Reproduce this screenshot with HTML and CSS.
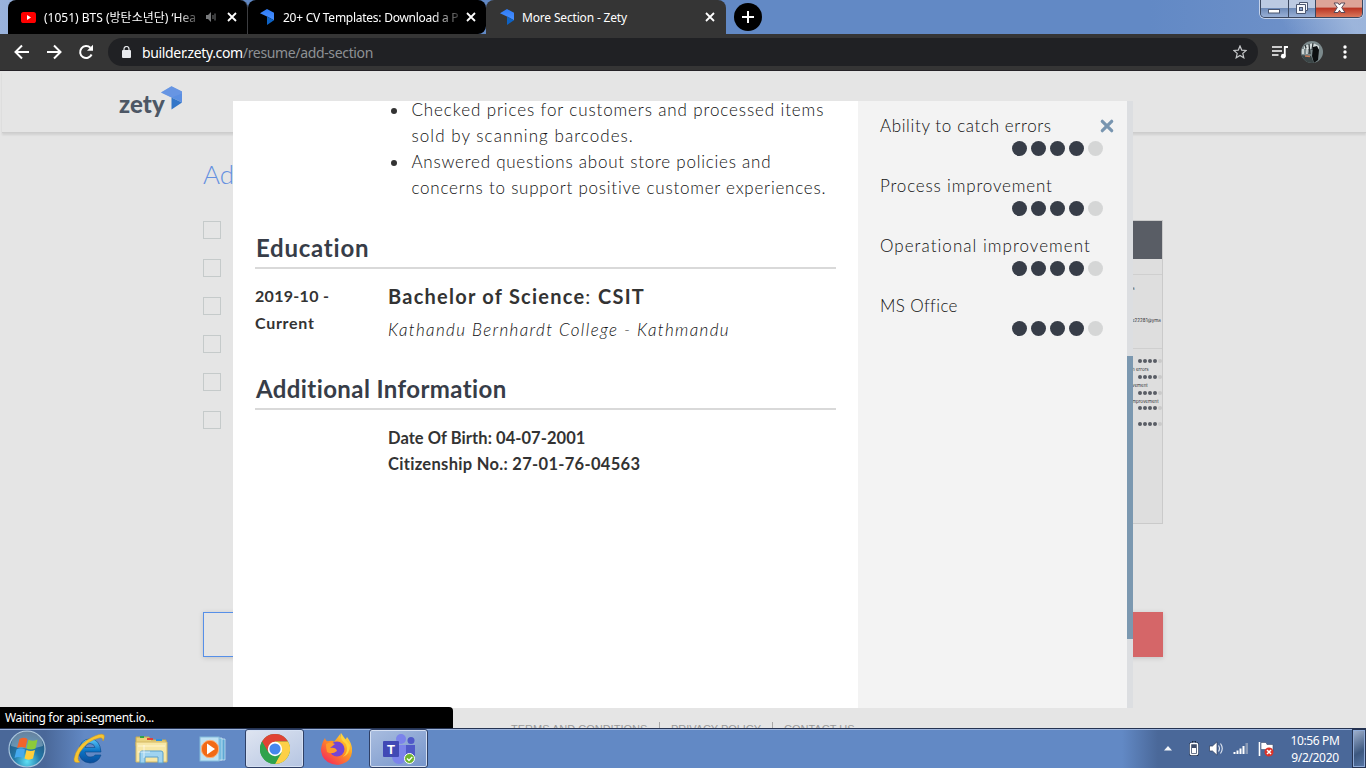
FILE: index.html
```
<!DOCTYPE html>
<html lang="en">
<head>
<meta charset="utf-8">
<title>More Section - Zety</title>
<link rel="stylesheet" href="styles.css">
</head>
<body>
<svg width="0" height="0" class="defs">
  <defs>
    <linearGradient id="zg" x1="0" y1="0" x2="0" y2="1"><stop offset="0" stop-color="#2d7bf6"/><stop offset="1" stop-color="#4a90ff"/></linearGradient>
    <radialGradient id="orb" cx=".5" cy=".85" r=".8"><stop offset="0" stop-color="#5fe0f5"/><stop offset=".45" stop-color="#2379a8"/><stop offset="1" stop-color="#264f78"/></radialGradient>
    <linearGradient id="ie" x1="0" y1="0" x2="0" y2="1"><stop offset="0" stop-color="#5bc8fa"/><stop offset=".5" stop-color="#0b73c4"/><stop offset="1" stop-color="#0a4d9b"/></linearGradient>
    <linearGradient id="fx" x1="1" y1="0" x2="0.2" y2="1"><stop offset="0" stop-color="#fff04d"/><stop offset=".45" stop-color="#ff9a1f"/><stop offset="1" stop-color="#f5275c"/></linearGradient>
    <clipPath id="av"><circle cx="11" cy="11" r="11"/></clipPath>
    <symbol id="zmark" viewBox="0 0 14 16"><path d="M0 4.200 7 0l7 3.800v7.400L7 7.600z" fill="url(#zg)"/><path d="M7 7.600l7 3.600L7 16z" fill="#0d62c4"/></symbol>
    <symbol id="cross" viewBox="0 0 10 10"><path d="M1 1l8 8M9 1L1 9" stroke="#fff" stroke-width="1.800"/></symbol>
  </defs>
</svg>
<div class="desktop">
  <div class="titlebar">
    <div class="tab tab-a">
      <svg class="yt" width="15" height="11" viewBox="0 0 15 11"><rect width="15" height="11" rx="2.600" fill="#f00"/><path d="M6 3v5l4-2.500z" fill="#fff"/></svg>
      <span class="tab-title t1">(1051) BTS (방탄소년단) ‘Hea</span>
      <svg class="spk" width="12" height="10" viewBox="0 0 12 10"><path d="M0 3h2l3-3v10L2 7H0z" fill="#77797b"/><path d="M7 3v4M9 1.500v7" stroke="#77797b" fill="none"/></svg>
      <svg class="x" width="10" height="10"><use href="#cross"/></svg>
    </div>
    <div class="tab tab-b">
      <svg width="14" height="16"><use href="#zmark"/></svg>
      <span class="tab-title t2">20+ CV Templates: Download a P</span>
      <svg class="x" width="10" height="10"><use href="#cross"/></svg>
    </div>
    <div class="tab tab-c">
      <svg width="14" height="16"><use href="#zmark"/></svg>
      <span class="tab-title t3">More Section - Zety</span>
      <svg class="x" width="10" height="10"><use href="#cross"/></svg>
    </div>
    <div class="newtab"><svg width="12" height="12" viewBox="0 0 12 12"><path d="M6 0v12M0 6h12" stroke="#fff" stroke-width="2"/></svg></div>
    <div class="winctl">
      <div class="wb wmin"><svg width="13" height="6"><rect x=".5" y="1.500" width="11" height="3.500" fill="#fff" stroke="#4b5670"/></svg></div>
      <div class="wb wmax"><svg width="13" height="13" viewBox="0 0 13 13"><path d="M3.500 .5h8v8h-2v3h-9v-9h3z" fill="#f4f6fa" stroke="#4b5670"/><path d="M9.500 8.500v-6h-6" fill="none" stroke="#4b5670"/><rect x="3.500" y="5.500" width="3" height="3" fill="#8ea5cc" stroke="#4b5670"/></svg></div>
      <div class="wb wclose"><svg width="13" height="12" viewBox="0 0 13 12"><path d="M1 1h4l1.500 2L8 1h4L8.700 5.500 12 10.500H8L6.500 8.300 5 10.500H1l3.300-5z" fill="#fff" stroke="#5a4a58"/></svg></div>
    </div>
  </div>

  <div class="toolbar">
    <svg class="nav" width="16" height="16" viewBox="0 0 16 16"><path d="M15 8H2M8 1.500L1.500 8 8 14.500" fill="none" stroke="#fff" stroke-width="2"/></svg>
    <svg class="nav" width="16" height="16" viewBox="0 0 16 16"><path d="M1 8h13M8 1.500L14.500 8 8 14.500" fill="none" stroke="#fff" stroke-width="2"/></svg>
    <svg class="nav" width="16" height="16" viewBox="0 0 16 16"><path d="M13.600 10.500a6 6 0 1 1-1.200-6.700" fill="none" stroke="#fff" stroke-width="2"/><path d="M15 .8v6H9z" fill="#fff"/></svg>
    <div class="omnibox">
      <svg width="9" height="12" viewBox="0 0 9 12"><rect y="4" width="9" height="8" rx="1" fill="#e8eaed"/><path d="M2 4.500V3a2.500 2.500 0 0 1 5 0v1.500" fill="none" stroke="#e8eaed" stroke-width="1.200"/></svg>
      <span class="url"><b>builder.zety.com</b>/resume/add-section</span>
      <svg class="star" width="14" height="14" viewBox="0 0 14 14"><path d="M7 1l1.700 4.100 4.500.4-3.400 2.900 1 4.400L7 10.500l-3.800 2.300 1-4.400L.8 5.500l4.500-.4z" fill="none" stroke="#c6c8ca" stroke-width="1.200"/></svg>
    </div>
    <svg class="queue" width="16" height="13" viewBox="0 0 16 13"><path d="M0 1h10M0 5h10M0 9h6.500" stroke="#fff" stroke-width="1.700"/><path d="M12.800 10V1H16" fill="none" stroke="#fff" stroke-width="1.800"/><circle cx="11.300" cy="10.200" r="2.400" fill="#fff"/></svg>
    <svg class="avatar" width="22" height="22" viewBox="0 0 22 22"><g clip-path="url(#av)"><rect width="22" height="22" fill="#7c8a8c"/><path d="M3 5l9-3 6 3v3H3z" fill="#d4dcdc"/><path d="M4 4l3 9M8 3l1 10M12 2l-1 7" stroke="#2c3335" stroke-width="1.300"/><path d="M12 6l4-1 2 4-1 10-4 3-2-7z" fill="#0c0f10"/><path d="M0 14l10 1 3 7H2z" fill="#3b4647"/><path d="M4 15l5 .5" stroke="#c77c58" stroke-width="1.500"/><path d="M2 8v5M6 7v6" stroke="#e7eceb" stroke-width="1.500"/></g></svg>
    <svg class="kebab" width="4" height="14" viewBox="0 0 4 14"><g fill="#fff"><circle cx="2" cy="2" r="1.700"/><circle cx="2" cy="7" r="1.700"/><circle cx="2" cy="12" r="1.700"/></g></svg>
  </div>

  <div class="page">
    <header class="site-head">
      <span class="brand">zety</span>
      <svg class="brandmark" width="21" height="24" viewBox="0 0 21 24"><path d="M0 6.500L10.500 .3 21 5.500v11L10.500 11.500z" fill="#5b8fe2"/><path d="M10.500 11.500l10.500 5L10.500 23.500z" fill="#3376c8"/><path d="M0 6.500L10.500 .3 21 5.500v2L10.500 11.500z" fill="#7099e4" opacity=".6"/></svg>
    </header>
    <main class="site-main">
      <h1>Ad</h1>
      <div class="cols">
        <div class="checks"><i></i><i></i><i></i><i></i><i></i><i></i></div>
        <div class="preview">
          <div class="pv-head"></div>
          <div class="pv-gap"></div>
          <div class="pv-contact"><span>a</span><span>e22281@yma</span></div>
          <div class="pv-skills">
            <p><em></em><em></em><em></em><em></em><em></em></p><small>h errors</small>
            <p><em></em><em></em><em></em><em></em><em></em></p><small>vement</small>
            <p><em></em><em></em><em></em><em></em><em></em></p><small>mprovement</small>
            <p><em></em><em></em><em></em><em></em><em></em></p><small></small>
            <p><em></em><em></em><em></em><em></em><em></em></p>
          </div>
        </div>
      </div>
      <div class="actions"><div class="btn back"></div><div class="btn next"></div></div>
    </main>
    <footer class="site-foot"><span class="f1">TERMS AND CONDITIONS</span><span class="f2">PRIVACY POLICY</span><span class="f3">CONTACT US</span></footer>

    <div class="modal">
      <div class="resume">
        <ul class="duties">
          <li><span class="l1">Checked prices for customers and processed items</span><br><span class="l2">sold by scanning barcodes.</span></li>
          <li><span class="l3">Answered questions about store policies and</span><br><span class="l4">concerns to support positive customer experiences.</span></li>
        </ul>
        <h2 class="edu">Education</h2>
        <div class="row">
          <div class="date"><span class="d1">2019-10 -</span><br><span class="d2">Current</span></div>
          <div><div class="degree"><b>Bachelor of Science</b>: <b>CSIT</b></div><div class="school">Kathandu Bernhardt College - Kathmandu</div></div>
        </div>
        <h2 class="addl">Additional Information</h2>
        <div class="info"><div class="n1">Date Of Birth: 04-07-2001</div><div class="n2">Citizenship No.: 27-01-76-04563</div></div>
      </div>
      <aside class="skills">
        <div class="skill"><div class="s1">Ability to catch errors</div><p><em></em><em></em><em></em><em></em><em></em></p></div>
        <div class="skill"><div class="s2">Process improvement</div><p><em></em><em></em><em></em><em></em><em></em></p></div>
        <div class="skill"><div class="s3">Operational improvement</div><p><em></em><em></em><em></em><em></em><em></em></p></div>
        <div class="skill"><div class="s4">MS Office</div><p><em></em><em></em><em></em><em></em><em></em></p></div>
        <svg class="close" width="14" height="14" viewBox="0 0 14 14"><path d="M2.300 2.300l9.400 9.400M11.700 2.300l-9.400 9.400" stroke="#7895b0" stroke-width="3.200" stroke-linecap="round"/></svg>
      </aside>
      <div class="scroll"><div class="thumb"></div></div>
    </div>
    <div class="status">Waiting for api.segment.io...</div>
  </div>

  <div class="taskbar">
    <svg class="start" width="38" height="38" viewBox="0 0 38 38"><circle cx="19" cy="19" r="18" fill="url(#orb)" stroke="#a7c4dc" stroke-width="1.200"/><path d="M3 16a16 15 0 0 1 32 0q-16 5-32 0z" fill="#fff" opacity=".3"/><path d="M11.500 9q4.500-2.500 8 0l-2 9q-4-2-8.500 0z" fill="#f0642c"/><path d="M20.500 9.800q4.500 2 9-.3l-2 9q-4.500 2-9 0z" fill="#8ccb3a"/><path d="M8.500 19.500q4-2.500 8.500 0l-2 8.500q-4.500-2-8.500 0z" fill="#45a9ee"/><path d="M18.500 20q4 2 8.500 0l-2 8.500q-4.500 2.300-8.500 0z" fill="#ffce3a"/></svg>
    <div class="slot ie"><svg width="34" height="32" viewBox="0 0 34 32"><path d="M29 19H13q1 5 5 5 4 0 5-2h6q-3 8-11 8-11-1-11-12Q8 6 18 6t11 13zM13 14.500h10q-1-4-5-4t-5 4z" fill="url(#ie)" stroke="#0b4687" stroke-width=".6" fill-rule="evenodd"/><path d="M8 29Q2 31 2 26 4 14 16 6.500 29-1 32 2q1 2-1 6 0-4-4-3Q16 7 8 19q-4 8 0 10z" fill="#f7c531" stroke="#cf961b" stroke-width=".5"/></svg></div>
    <div class="slot"><svg width="33" height="30" viewBox="0 0 33 30"><path d="M1 3h13l2 3h15v6H1z" fill="#e9d27d" stroke="#c6a94e"/><path d="M5 2h4v2H5z" fill="#2ea44a"/><path d="M12 4h6v2h-6z" fill="#e2413a"/><path d="M21 5h6v2h-6z" fill="#2e8fe0"/><path d="M1 8h31v20H1z" fill="#f7e7a6" stroke="#d3b863"/><path d="M3 12h27" stroke="#fff6cf"/><path d="M5 29V19q0-2 2-2h19q2 0 2 2v10h-5v-6H10v6z" fill="#9fd3f0" stroke="#5a9fca"/><path d="M9 11v13M3 18h12" stroke="#fff" stroke-width=".8" opacity=".8"/></svg></div>
    <div class="slot wmp"><svg width="30" height="28" viewBox="0 0 30 28"><path d="M17 4h9v21h-9z" fill="#5ea9d4" stroke="#d6ecf8" stroke-width=".7"/><path d="M14 3h9v22h-9z" fill="#76bce0" stroke="#d6ecf8" stroke-width=".7"/><rect x="1" y="2" width="19" height="24" fill="#bfe2f3" stroke="#83bcdc"/><circle cx="11" cy="14" r="8.700" fill="#f26a16" stroke="#fbb27c"/><path d="M8 8.500v11l8-5.500z" fill="#fff"/></svg></div>
    <div class="slot on chrome"><svg width="30" height="30" viewBox="0 0 30 30"><circle cx="15" cy="15" r="15" fill="#2fa24c"/><path d="M2 7.500a15 15 0 0 1 26 0H15L8.500 18.800z" fill="#e04334"/><path d="M28 7.500A15 15 0 0 1 15 30l6.500-11.200L15 7.500z" fill="#fdd047"/><path d="M2 7.500L8.500 18.800l6.500 3 4.500-1L15 30A15 15 0 0 1 2 7.500z" fill="#2fa24c"/><circle cx="15" cy="15" r="7.200" fill="#fff"/><circle cx="15" cy="15" r="5.600" fill="#4587ee"/></svg></div>
    <div class="slot fox"><svg width="31" height="32" viewBox="0 0 31 32"><path d="M20 0q-2 4 2 7 3 0 4-3 6 8 5 15-1 11-14 13Q2 31 0 18 0 11 4 5q1 4 4 3 4-1 5 1z" fill="url(#fx)"/><circle cx="16" cy="16" r="7.500" fill="#7445d4"/><path d="M5 11q4-3 9 0l-5 4q6-1 7 3-5 4-10 1-1-4-1-8z" fill="#ff9a2b"/><path d="M20 0q-2 6 5 11 3 8-3 13 7-3 7-12-3-3-9-12z" fill="#ffd33c"/></svg></div>
    <div class="slot on teams"><svg width="32" height="30" viewBox="0 0 32 30"><circle cx="18" cy="5" r="5" fill="#7b83eb"/><circle cx="28" cy="6.500" r="3.500" fill="#5059c9"/><path d="M22 11h10v10q-1 5-6 5h-4z" fill="#5059c9"/><path d="M9 11h14v12q-1 7-7 7t-7-7z" fill="#7b83eb"/><rect y="7" width="16" height="16" rx="1" fill="#4149b5"/><text x="8" y="20" text-anchor="middle" class="teams-t">T</text><circle cx="26.500" cy="24.500" r="5" fill="#6fb52c" stroke="#fff"/><path d="M24 24.500l2 2 3.300-3.600" fill="none" stroke="#fff" stroke-width="1.400"/></svg></div>
    <div class="tray">
      <svg width="8" height="5" viewBox="0 0 8 5"><path d="M0 4.500h8L4 0z" fill="#f2f5fa"/></svg>
      <svg class="bat" width="10" height="15" viewBox="0 0 10 15"><path d="M3.500 0h3v2H9v12.300H1V2h2.500z" fill="none" stroke="#17243b" stroke-width="1"/><rect x="1.500" y="2.500" width="7" height="11" rx="1" fill="#3d4c68" stroke="#fff" stroke-width="1.400"/><rect x="3" y="7" width="4" height="5" fill="#fff"/></svg>
      <svg class="vol" width="15" height="15" viewBox="0 0 15 15"><path d="M.5 5h3L8 .8v13.400L3.500 10h-3z" fill="#fff" stroke="#2c3b59" stroke-width=".7"/><path d="M9.500 4.500q2 3 0 6M11.500 2.500q3.500 5 0 10" fill="none" stroke="#e5ebf5" stroke-width="1.100"/></svg>
      <svg class="sig" width="16" height="13" viewBox="0 0 16 13"><path d="M.5 10h2v2h-2zM3.500 8.500h2V12h-2zM6.500 6.500h2V12h-2zM9.500 4h2v8h-2z" fill="#fff"/><path d="M12.500 1h2.500v11h-2.500z" fill="#8a9ab5"/></svg>
      <svg class="flag" width="16" height="16" viewBox="0 0 16 16"><path d="M1.500 1v14" stroke="#fff" stroke-width="1.600"/><path d="M3 1.500h5l1 2h6v7H9l-1-2H3z" fill="#fff" stroke="#3b4c6d" stroke-width=".6"/><circle cx="11" cy="11" r="4.500" fill="#dc3328"/><path d="M9 9l4 4M13 9l-4 4" stroke="#fff" stroke-width="1.500"/></svg>
      <div class="clock"><div>10:56 PM</div><div>9/2/2020</div></div>
      <div class="peek"></div>
    </div>
  </div>
</div>
</body>
</html>
```
FILE: styles.css
```
* { box-sizing: border-box; }
body { margin: 0; overflow: hidden; font-family: "Noto Sans", "Noto Sans CJK KR", sans-serif; font-size: 12px; }
.defs { position: absolute; }
svg { display: block; flex: none; }
p { margin: 0; }
.desktop { width: 1366px; height: 768px; display: grid; grid-template-rows: 34px 37px 657px 40px; grid-template-columns: 1366px; }

/* tab strip */
.titlebar { display: flex; padding-left: 8px; background: linear-gradient(60deg, transparent 93%, rgba(170,192,225,.75) 98%), linear-gradient(90deg, #9ab3dc 0, #6289c5 240px, #6289c5 1150px, #7394ca 1366px); }
.tab { display: flex; align-items: center; height: 34px; background: #000; color: #fff; border-radius: 8px 8px 0 0; }
.tab-a { width: 240px; padding-left: 13px; border-right: 1px solid #3c3d40; }
.tab-b { width: 238px; padding-left: 12px; border-radius: 8px 8px 8px 0; }
.tab-c { width: 240px; padding-left: 14px; background: #353535; }
.tab-title { flex: none; white-space: nowrap; }
.yt { margin-right: 8px; }
.t1 { width: 156px; letter-spacing: 0; -webkit-mask-image: linear-gradient(90deg, #000 86%, transparent 102%); mask-image: linear-gradient(90deg, #000 86%, transparent 102%); }
.spk { margin-left: 6px; }
.tab-a .x { margin-left: 9px; }
.t2 { width: 177px; margin-left: 9px; letter-spacing: -.26px; -webkit-mask-image: linear-gradient(90deg, #000 84%, transparent 104%); mask-image: linear-gradient(90deg, #000 84%, transparent 104%); }
.tab-b .x { margin-left: 6px; }
.t3 { width: 183px; margin-left: 8px; letter-spacing: -.17px; }
.newtab { width: 28px; height: 28px; margin: 3px 0 0 8px; border-radius: 50%; background: #000; display: grid; place-items: center; }
.winctl { display: flex; height: 18px; margin-left: 498px; border: 1px solid #3b475f; border-top: 0; border-radius: 0 0 5px 5px; box-shadow: 0 0 0 1px #c4d2ea; overflow: hidden; }
.wb { display: grid; place-items: center; height: 17px; padding-bottom: 1px; background: linear-gradient(#bccae2 0 45%, #6f8bb8 50%, #98afd5); border-right: 1px solid #3b475f; }
.wmin { width: 28px; padding-top: 5px; }
.wmax { width: 27px; }
.wclose { width: 46px; border-right: 0; background: linear-gradient(#dda497 0 40%, #bb3725 50%, #d9785c); }

/* address bar */
.toolbar { display: flex; align-items: center; padding: 0 19px 0 14px; background: #353535; border-bottom: 1px solid #252227; }
.nav { margin-right: 16px; }
.omnibox { display: flex; align-items: center; width: 1151px; height: 28px; margin-left: -2px; padding: 0 11px 0 14px; border-radius: 14px; background: #202124; }
.url { margin-left: 11px; font-size: 14px; letter-spacing: -.35px; color: #8e9194; }
.url b { font-weight: 400; color: #fff; }
.star { margin-left: auto; }
.queue { margin-left: 14px; }
.avatar { margin-left: 13px; }
.kebab { margin-left: 20px; }

/* dimmed site */
.page { position: relative; overflow: hidden; background: #e5e5e5; }
.site-head { display: flex; height: 62px; margin-left: 2px; padding: 15px 0 0 117px; border-bottom: 1px solid #cdcdcd; box-shadow: 0 2px 2px rgba(0,0,0,.09); }
.brand { width: 42px; font: 900 24px/36px Lato, sans-serif; letter-spacing: .1px; color: #4d5765; }
.site-main { width: 960px; margin-left: 203px; padding-top: 25px; }
.site-main h1 { margin: 0; font: 300 26px/32px Lato, sans-serif; color: #6490e0; }
.cols { display: flex; justify-content: space-between; padding-top: 31px; height: 334px; }
.checks { display: grid; align-content: start; gap: 20px; }
.checks i { width: 18px; height: 18px; border: 1px solid #c5caca; }
.preview { width: 42px; height: 304px; margin-top: -1px; overflow: hidden; border: 1px solid #cacaca; background: #dedede; color: #35353b; font: 4.500px/6px Inter, sans-serif; }
.pv-head { height: 38px; background: #595d65; }
.pv-gap { height: 16px; border-bottom: 1px solid #cfcfcf; }
.pv-contact { display: grid; grid-template-rows: 32px 40px; height: 74px; padding: 11px 0 0 10px; border-bottom: 1px solid #cfcfcf; }
.pv-skills { padding: 10px 0 0 10px; }
.pv-skills p { display: flex; justify-content: flex-end; gap: 1px; height: 4px; }
.pv-skills em { width: 4px; height: 4px; border-radius: 50%; background: #595d65; }
.pv-skills em:last-child { background: #cacaca; }
.pv-skills small { display: block; height: 11.800px; font-size: 4.500px; line-height: 13px; }
.actions { display: flex; justify-content: space-between; padding-top: 88px; }
.btn { width: 120px; height: 45px; box-shadow: 0 1px 5px rgba(0,0,0,.15); }
.back { border: 1px solid rgb(86, 143, 232); }
.next { background: #d56668; }
.site-foot { display: flex; margin: 65px 0 0 511px; font: 11px/14px "Liberation Sans", sans-serif; color: #9a9a9a; white-space: nowrap; }
.f1 { width: 149px; border-right: 1px solid #a8a8a8; }
.f2 { width: 113px; padding-left: 11px; border-right: 1px solid #a8a8a8; letter-spacing: -.05px; }
.f3 { padding-left: 11px; }

/* resume preview dialog */
.modal { position: absolute; left: 233px; top: 30px; width: 900px; height: 607px; display: grid; grid-template-columns: 625px 269px 6px; background: #fff; overflow: hidden; font-family: Lato, sans-serif; color: #333; white-space: nowrap; }
.resume { padding: 0 22px; }
.duties { list-style: none; margin: -4px 0 0; padding: 0 0 0 156.500px; font-size: 17px; font-weight: 300; line-height: 26px; color: #111; }
.duties li { display: block; position: relative; }
.duties li::before { content: ""; position: absolute; left: -21px; top: 11px; width: 6px; height: 6px; border-radius: 50%; background: #333; }
.l1 { letter-spacing: .88px; }
.l2 { letter-spacing: 1.060px; }
.l3 { letter-spacing: .76px; }
.l4 { letter-spacing: .76px; }
h2 { height: 36px; margin: 0; padding-left: 1px; font-size: 24px; line-height: 29px; color: #373d48; border-bottom: 2px solid #d9d9d9; }
.edu { margin-top: 32px; letter-spacing: .75px; }
.addl { margin-top: 26px; letter-spacing: .4px; }
.row { display: grid; grid-template-columns: 133px 1fr; margin-top: 13px; }
.date { font-size: 16px; font-weight: 700; line-height: 27px; }
.d1 { letter-spacing: .3px; }
.d2 { letter-spacing: .72px; }
.degree { font-size: 20px; line-height: 28px; letter-spacing: 1.240px; }
.school { padding-top: 2px; font-size: 17px; font-weight: 300; font-style: italic; line-height: 36px; letter-spacing: 1.360px; color: #111; }
.info { margin-top: 15px; padding-left: 133px; font-size: 16.500px; font-weight: 700; line-height: 26px; }
.n1 { letter-spacing: .06px; }
.n2 { letter-spacing: .3px; }
.skills { position: relative; padding: 12px 24px 0 22px; background: #f3f3f3; font-size: 17px; font-weight: 300; line-height: 25px; color: #111; }
.skill { height: 60px; }
.skill p { display: flex; justify-content: flex-end; gap: 4px; padding-top: 3px; }
.skill em { width: 15px; height: 15px; border-radius: 50%; background: #373d48; }
.skill em:last-child { background: #d5d6d6; }
.s1 { letter-spacing: .63px; }
.s2 { letter-spacing: .83px; }
.s3 { letter-spacing: 1.040px; }
.s4 { letter-spacing: .35px; }
.close { position: absolute; right: 13px; top: 18px; }
.scroll { padding-top: 255px; background: #dcdee1; }
.thumb { height: 283px; background: #7b98b0; }
.status { position: absolute; left: 0; bottom: 0; width: 453px; height: 21px; padding-left: 5px; border-radius: 0 4px 0 0; background: #000; color: #fff; line-height: 22px; letter-spacing: -.34px; }

/* taskbar */
.taskbar { display: flex; align-items: center; padding-left: 8px; border-top: 1px solid #253352; box-shadow: inset 0 1px #9db5de; background: linear-gradient(90deg, #4a6899 0, #4a6899 45px, #6289c5 85px, #6289c5 1122px, #4a6899 1158px); }
.start { margin-right: 12px; }
.slot { display: grid; place-items: center; width: 62px; height: 38px; }
.slot.on { width: 59px; height: 39px; border: 1px solid #2f4066; border-radius: 3px; box-shadow: inset 0 0 0 1px #d5e0f3; background: linear-gradient(150deg, #c9d5ea, #96aed8); }
.chrome.on { background: linear-gradient(150deg, #dfe5f1, #b5c5e2); }
.wmp { width: 63px; }
.teams.on { background: linear-gradient(150deg, #a9bddf, #7695cb); }
.fox { width: 65px; }
.teams-t { font: 700 13px "Liberation Sans", sans-serif; fill: #fff; }
.tray { display: flex; align-items: center; height: 39px; margin-left: auto; color: #fff; }
.bat { margin-left: 17px; }
.vol { margin-left: 10px; }
.sig { margin-left: 9px; }
.flag { margin-left: 9px; }
.clock { width: 78px; padding-left: 4px; text-align: center; line-height: 17px; letter-spacing: -.35px; }
.peek { width: 14px; height: 39px; border: 1px solid #253352; box-shadow: inset 0 0 0 1px #8fabd8; background: linear-gradient(150deg, #a3b3cf, #3c577f 60%, #5776a6); }
```
